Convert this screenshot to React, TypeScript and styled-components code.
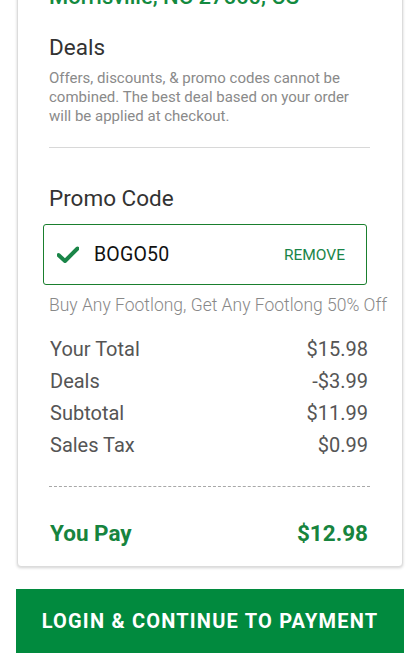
import React from "react";
import styled, { createGlobalStyle } from "styled-components";

const Global = createGlobalStyle`
  html, body { margin: 0; padding: 0; background: #fff; }
  body { font-family: Roboto, "Noto Sans", Arial, sans-serif; -webkit-font-smoothing: antialiased; }
  * { box-sizing: border-box; }
`;

const Page = styled.div`
  width: 414px;
  height: 655px;
  overflow: hidden;
  display: flex;
  flex-direction: column;
`;

const Card = styled.section`
  margin: -40px 11px 0 17px;
  padding: 22px 32px 19px 31px;
  background: #fff;
  border: 1px solid #dcdcdc;
  border-radius: 4px;
  box-shadow: 0 1px 3px rgba(0, 0, 0, 0.18);
  display: flex;
  flex-direction: column;
`;

const Address = styled.div`
  font-size: 22px;
  line-height: 28px;
  color: #138a3f;
  font-weight: 500;
  white-space: nowrap;
`;

const Heading = styled.h2<{ $top: number }>`
  margin: ${(p) => p.$top}px 0 0;
  font-size: 22.5px;
  line-height: 28px;
  font-weight: 400;
  color: #333;
`;

const Note = styled.p`
  margin: 8px 0 0;
  font-size: 15px;
  line-height: 19px;
  color: #8a8a8a;
`;

const Divider = styled.hr<{ $dashed?: boolean; $top: number }>`
  margin: ${(p) => p.$top}px 0 0;
  border: 0;
  border-top: 1px ${(p) => (p.$dashed ? "dashed #a8a8a8" : "solid #d8d8d8")};
  height: 0;
`;

const PromoBox = styled.div`
  margin: 12px 3px 0 -6px;
  height: 61px;
  border: 1px solid #1a7f2e;
  border-radius: 3px;
  display: flex;
  align-items: center;
  padding: 0 21px 0 13px;
`;

const Code = styled.span`
  margin-left: 15px;
  font-size: 19.5px;
  color: #111;
  letter-spacing: 0.2px;
  flex: 1;
`;

const Remove = styled.button`
  border: 0;
  background: none;
  padding: 0;
  font-family: inherit;
  font-size: 15.5px;
  color: #1a8548;
  letter-spacing: 0;
  cursor: pointer;
`;

const Hint = styled.div`
  margin-top: 10px;
  font-size: 17.5px;
  line-height: 20px;
  font-weight: 300;
  color: #888;
  white-space: nowrap;
`;

const Totals = styled.div`
  margin-top: 18px;
  display: flex;
  flex-direction: column;
`;

const Row = styled.div<{ $strong?: boolean }>`
  display: flex;
  justify-content: space-between;
  align-items: center;
  height: ${(p) => (p.$strong ? 28 : 32)}px;
  padding: 0 2px 0 1px;
  font-size: ${(p) => (p.$strong ? 22.5 : 20)}px;
  font-weight: ${(p) => (p.$strong ? 700 : 400)};
  color: ${(p) => (p.$strong ? "#17843e" : "#555")};
  margin-top: ${(p) => (p.$strong ? 32 : 0)}px;
`;

const PayButton = styled.button`
  margin: 22px 10px 0 16px;
  height: 64px;
  flex-shrink: 0;
  border: 0;
  background: #018a3e;
  color: #fff;
  font-family: inherit;
  font-size: 20px;
  font-weight: 700;
  letter-spacing: 1.2px;
  cursor: pointer;
`;

const Check = () => (
  <svg width="22" height="17" viewBox="0 0 22 17" aria-hidden="true">
    <path d="M1.5 9 L8 15 L20.5 2.5" fill="none" stroke="#1a8548" strokeWidth="4" strokeLinecap="round" strokeLinejoin="round" />
  </svg>
);

const rows = [
  ["Your Total", "$15.98"],
  ["Deals", "-$3.99"],
  ["Subtotal", "$11.99"],
  ["Sales Tax", "$0.99"],
];

export default function App() {
  return (
    <>
      <Global />
      <Page>
        <Card>
          <Address>Morrisville, NC 27560, US</Address>
          <Heading $top={22}>Deals</Heading>
          <Note>
            Offers, discounts, &amp; promo codes cannot be combined. The best deal based on your order will be applied at checkout.
          </Note>
          <Divider $top={21} />
          <Heading $top={36}>Promo Code</Heading>
          <PromoBox>
            <Check />
            <Code>BOGO50</Code>
            <Remove>REMOVE</Remove>
          </PromoBox>
          <Hint>Buy Any Footlong, Get Any Footlong 50% Off</Hint>
          <Totals>
            {rows.map(([label, value]) => (
              <Row key={label}>
                <span>{label}</span>
                <span>{value}</span>
              </Row>
            ))}
          </Totals>
          <Divider $dashed $top={25} />
          <Row $strong>
            <span>You Pay</span>
            <span>$12.98</span>
          </Row>
        </Card>
        <PayButton>LOGIN &amp; CONTINUE TO PAYMENT</PayButton>
      </Page>
    </>
  );
}
